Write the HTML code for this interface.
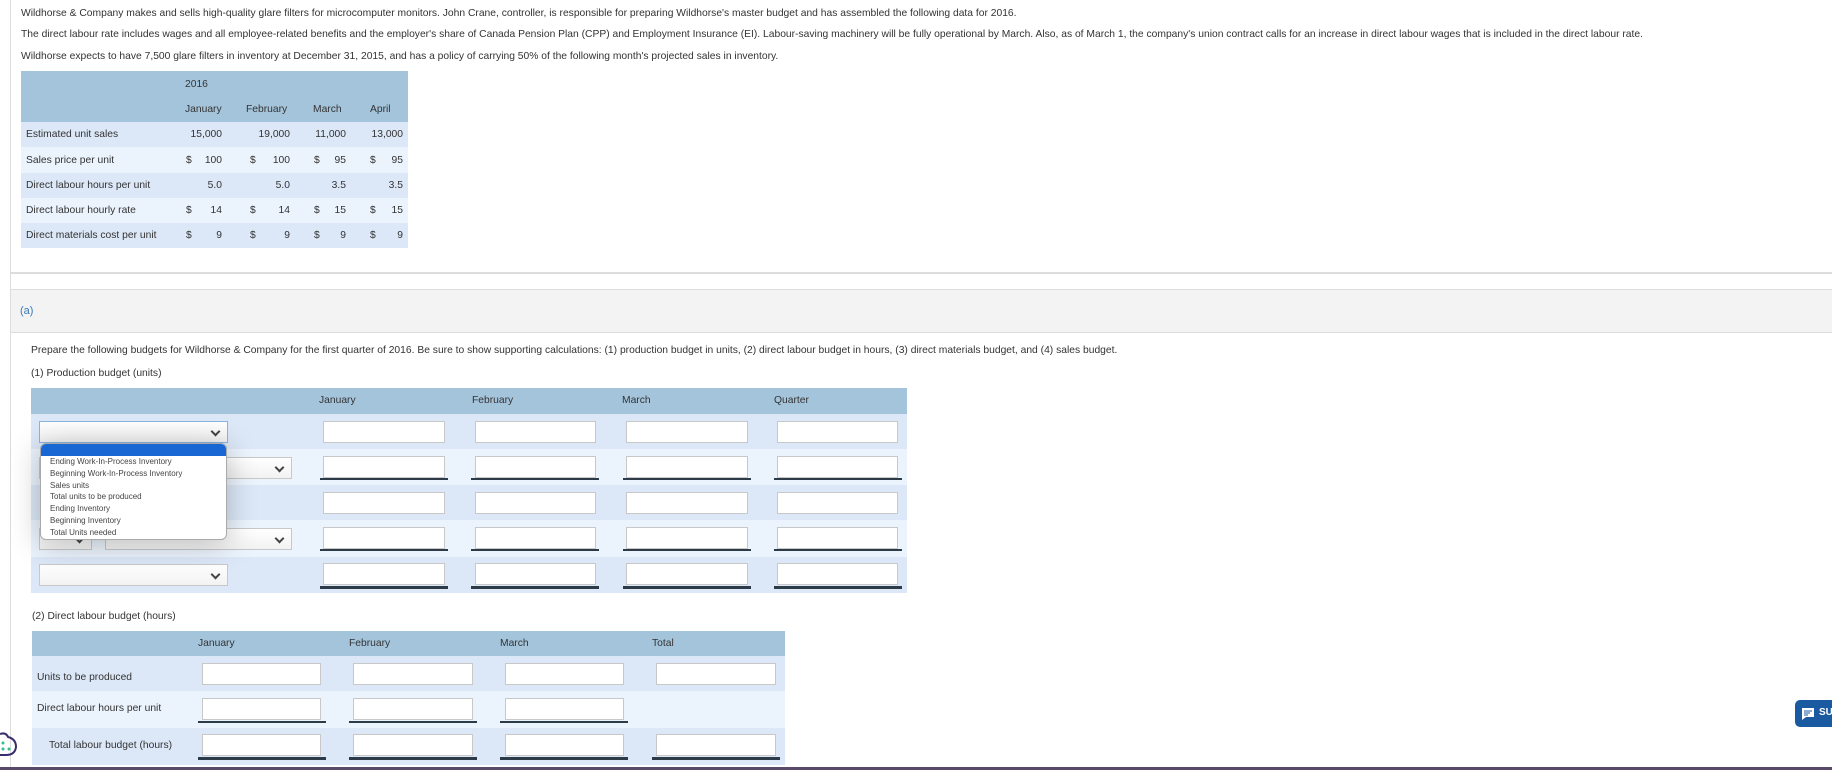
<!DOCTYPE html>
<html><head><meta charset="utf-8"><style>
*{box-sizing:border-box;margin:0;padding:0}
body{width:1832px;height:770px;overflow:hidden;background:#fff;font-family:"Liberation Sans",sans-serif;font-size:10.3px;color:#333;position:relative}
.a{position:absolute;white-space:nowrap}
.bg1{background:#a4c4dc}.r1{background:#dce8f7}.r2{background:#ebf3fd}
.inp{position:absolute;background:#fff;border:1px solid #c8c8c8;height:22px}
.ul{position:absolute;height:2px;background:#2d3a48}
.ul2{position:absolute;height:3px;background:#2d3a48}
.sel{position:absolute;background:linear-gradient(#fff,#f2f2f2);border:1px solid #c8c8c8;height:22px}
.sel:after{content:"";position:absolute;right:8px;top:6px;width:5px;height:5px;border-right:2px solid #444;border-bottom:2px solid #444;transform:rotate(45deg)}
</style></head><body>
<div class="a" style="left:10px;top:0;width:1px;height:770px;background:#ddd"></div>
<div class="a" style="left:11px;top:272px;width:1821px;height:2px;background:#ddd"></div>
<div class="a" style="left:21px;top:8px">Wildhorse &amp; Company makes and sells high-quality glare filters for microcomputer monitors. John Crane, controller, is responsible for preparing Wildhorse's master budget and has assembled the following data for 2016.</div>
<div class="a" style="left:21px;top:29px">The direct labour rate includes wages and all employee-related benefits and the employer's share of Canada Pension Plan (CPP) and Employment Insurance (EI). Labour-saving machinery will be fully operational by March. Also, as of March 1, the company's union contract calls for an increase in direct labour wages that is included in the direct labour rate.</div>
<div class="a" style="left:21px;top:51px">Wildhorse expects to have 7,500 glare filters in inventory at December 31, 2015, and has a policy of carrying 50% of the following month's projected sales in inventory.</div>

<div class="a bg1" style="left:21px;top:71px;width:387px;height:51px"></div>
<div class="a" style="left:185px;top:79px">2016</div>
<div class="a" style="left:185px;top:104px">January</div><div class="a" style="left:246px;top:104px">February</div><div class="a" style="left:313px;top:104px">March</div><div class="a" style="left:370px;top:104px">April</div>
<div class="a r1" style="left:21px;top:122px;width:387px;height:25px"></div>
<div class="a r2" style="left:21px;top:147px;width:387px;height:26px"></div>
<div class="a r1" style="left:21px;top:173px;width:387px;height:25px"></div>
<div class="a r2" style="left:21px;top:198px;width:387px;height:25px"></div>
<div class="a r1" style="left:21px;top:223px;width:387px;height:25px"></div>
<div class="a" style="left:26px;top:129px">Estimated unit sales</div>
<div class="a" style="left:26px;top:155px">Sales price per unit</div>
<div class="a" style="left:26px;top:180px">Direct labour hours per unit</div>
<div class="a" style="left:26px;top:205px">Direct labour hourly rate</div>
<div class="a" style="left:26px;top:230px">Direct materials cost per unit</div>
<div class="a" style="right:1610px;top:129px">15,000</div><div class="a" style="right:1542px;top:129px">19,000</div><div class="a" style="right:1486px;top:129px">11,000</div><div class="a" style="right:1429px;top:129px">13,000</div>
<div class="a" style="left:186px;top:155px">$</div><div class="a" style="right:1610px;top:155px">100</div><div class="a" style="left:250px;top:155px">$</div><div class="a" style="right:1542px;top:155px">100</div><div class="a" style="left:314px;top:155px">$</div><div class="a" style="right:1486px;top:155px">95</div><div class="a" style="left:370px;top:155px">$</div><div class="a" style="right:1429px;top:155px">95</div>
<div class="a" style="right:1610px;top:180px">5.0</div><div class="a" style="right:1542px;top:180px">5.0</div><div class="a" style="right:1486px;top:180px">3.5</div><div class="a" style="right:1429px;top:180px">3.5</div>
<div class="a" style="left:186px;top:205px">$</div><div class="a" style="right:1610px;top:205px">14</div><div class="a" style="left:250px;top:205px">$</div><div class="a" style="right:1542px;top:205px">14</div><div class="a" style="left:314px;top:205px">$</div><div class="a" style="right:1486px;top:205px">15</div><div class="a" style="left:370px;top:205px">$</div><div class="a" style="right:1429px;top:205px">15</div>
<div class="a" style="left:186px;top:230px">$</div><div class="a" style="right:1610px;top:230px">9</div><div class="a" style="left:250px;top:230px">$</div><div class="a" style="right:1542px;top:230px">9</div><div class="a" style="left:314px;top:230px">$</div><div class="a" style="right:1486px;top:230px">9</div><div class="a" style="left:370px;top:230px">$</div><div class="a" style="right:1429px;top:230px">9</div>

<div class="a" style="left:11px;top:289px;width:1821px;height:44px;background:#f3f3f3;border-top:1px solid #ddd;border-bottom:1px solid #ddd"></div>
<div class="a" style="left:20px;top:305px;color:#3a7ab8;font-size:11px">(a)</div>
<div class="a" style="left:31px;top:345px">Prepare the following budgets for Wildhorse &amp; Company for the first quarter of 2016. Be sure to show supporting calculations: (1) production budget in units, (2) direct labour budget in hours, (3) direct materials budget, and (4) sales budget.</div>
<div class="a" style="left:31px;top:368px">(1) Production budget (units)</div>

<div class="a bg1" style="left:31px;top:388px;width:876px;height:26px"></div>
<div class="a" style="left:319px;top:395px">January</div><div class="a" style="left:472px;top:395px">February</div><div class="a" style="left:622px;top:395px">March</div><div class="a" style="left:774px;top:395px">Quarter</div>
<div class="a r1" style="left:31px;top:414px;width:876px;height:35px"></div>
<div class="a r2" style="left:31px;top:449px;width:876px;height:36px"></div>
<div class="a r1" style="left:31px;top:485px;width:876px;height:35px"></div>
<div class="a r2" style="left:31px;top:520px;width:876px;height:37px"></div>
<div class="a r1" style="left:31px;top:557px;width:876px;height:36px"></div>

<div class="sel" style="left:39px;top:421px;width:189px;border-color:#8ab4e0"></div>
<div class="sel" style="left:39px;top:457px;width:253px"></div>
<div class="sel" style="left:39px;top:528px;width:53px"></div>
<div class="sel" style="left:105px;top:528px;width:187px"></div>
<div class="sel" style="left:39px;top:564px;width:189px"></div>

<div class="inp" style="left:323px;top:421px;width:122px"></div><div class="inp" style="left:475px;top:421px;width:121px"></div><div class="inp" style="left:626px;top:421px;width:122px"></div><div class="inp" style="left:777px;top:421px;width:121px"></div>
<div class="inp" style="left:323px;top:456px;width:122px"></div><div class="inp" style="left:475px;top:456px;width:121px"></div><div class="inp" style="left:626px;top:456px;width:122px"></div><div class="inp" style="left:777px;top:456px;width:121px"></div>
<div class="ul" style="left:320px;top:478px;width:128px"></div><div class="ul" style="left:471px;top:478px;width:128px"></div><div class="ul" style="left:623px;top:478px;width:128px"></div><div class="ul" style="left:774px;top:478px;width:128px"></div>
<div class="inp" style="left:323px;top:492px;width:122px"></div><div class="inp" style="left:475px;top:492px;width:121px"></div><div class="inp" style="left:626px;top:492px;width:122px"></div><div class="inp" style="left:777px;top:492px;width:121px"></div>
<div class="inp" style="left:323px;top:527px;width:122px"></div><div class="inp" style="left:475px;top:527px;width:121px"></div><div class="inp" style="left:626px;top:527px;width:122px"></div><div class="inp" style="left:777px;top:527px;width:121px"></div>
<div class="ul" style="left:320px;top:549px;width:128px"></div><div class="ul" style="left:471px;top:549px;width:128px"></div><div class="ul" style="left:623px;top:549px;width:128px"></div><div class="ul" style="left:774px;top:549px;width:128px"></div>
<div class="inp" style="left:323px;top:563px;width:122px"></div><div class="inp" style="left:475px;top:563px;width:121px"></div><div class="inp" style="left:626px;top:563px;width:122px"></div><div class="inp" style="left:777px;top:563px;width:121px"></div>
<div class="ul2" style="left:320px;top:586px;width:128px"></div><div class="ul2" style="left:471px;top:586px;width:128px"></div><div class="ul2" style="left:623px;top:586px;width:128px"></div><div class="ul2" style="left:774px;top:586px;width:128px"></div>

<div class="a" style="left:40px;top:443px;width:187px;height:97px;background:#fff;border:1px solid #aaa;border-radius:6px;overflow:hidden;box-shadow:0 4px 30px rgba(0,0,0,.25);font-size:8px;color:#444;line-height:11.8px">
<div style="height:12px;background:#1967d2"></div>
<div style="padding-left:9px">Ending Work-In-Process Inventory<br>Beginning Work-In-Process Inventory<br>Sales units<br>Total units to be produced<br>Ending Inventory<br>Beginning Inventory<br>Total Units needed</div></div>

<div class="a" style="left:32px;top:611px">(2) Direct labour budget (hours)</div>
<div class="a bg1" style="left:32px;top:631px;width:753px;height:25px"></div>
<div class="a" style="left:198px;top:638px">January</div><div class="a" style="left:349px;top:638px">February</div><div class="a" style="left:500px;top:638px">March</div><div class="a" style="left:652px;top:638px">Total</div>
<div class="a r1" style="left:32px;top:656px;width:753px;height:35px"></div>
<div class="a r2" style="left:32px;top:691px;width:753px;height:37px"></div>
<div class="a r1" style="left:32px;top:728px;width:753px;height:37px"></div>
<div class="a" style="left:37px;top:672px">Units to be produced</div>
<div class="a" style="left:37px;top:703px">Direct labour hours per unit</div>
<div class="a" style="left:49px;top:740px">Total labour budget (hours)</div>
<div class="inp" style="left:202px;top:663px;width:119px"></div><div class="inp" style="left:353px;top:663px;width:120px"></div><div class="inp" style="left:505px;top:663px;width:119px"></div><div class="inp" style="left:656px;top:663px;width:120px"></div>
<div class="inp" style="left:202px;top:698px;width:119px"></div><div class="inp" style="left:353px;top:698px;width:120px"></div><div class="inp" style="left:505px;top:698px;width:119px"></div>
<div class="ul" style="left:198px;top:721px;width:128px"></div><div class="ul" style="left:349px;top:721px;width:128px"></div><div class="ul" style="left:500px;top:721px;width:128px"></div>
<div class="inp" style="left:202px;top:734px;width:119px"></div><div class="inp" style="left:353px;top:734px;width:120px"></div><div class="inp" style="left:505px;top:734px;width:119px"></div><div class="inp" style="left:656px;top:734px;width:120px"></div>
<div class="ul2" style="left:198px;top:757px;width:128px"></div><div class="ul2" style="left:349px;top:757px;width:128px"></div><div class="ul2" style="left:500px;top:757px;width:128px"></div><div class="ul2" style="left:652px;top:757px;width:128px"></div>

<svg class="a" style="left:0;top:731px" width="18" height="28" viewBox="0 0 18 28"><path d="M0 3 Q6 1 8 6 Q16 8 16 16 Q15 24 6 24 L0 24" fill="none" stroke="#3a2d6e" stroke-width="2"/><circle cx="3" cy="12" r="1.5" fill="#2fc08a"/><circle cx="3" cy="18" r="1.5" fill="#2fc08a"/><circle cx="9" cy="18" r="1.5" fill="#2fc08a"/></svg>

<div class="a" style="left:1795px;top:700px;width:40px;height:27px;background:#1a5aa0;border-radius:5px 0 0 5px;color:#fff;font-size:10px;font-weight:bold;padding:7px 0 0 24px">SU</div>
<svg class="a" style="left:1801px;top:707px" width="14" height="14" viewBox="0 0 14 14"><path d="M1 1h12v9H5l-4 3z" fill="#fff"/><path d="M3 4h8M3 6h6M3 8h4" stroke="#1a5aa0" stroke-width="1"/></svg>
<div class="a" style="left:0;top:767px;width:1832px;height:3px;background:#5a4a6a"></div>
</body></html>
